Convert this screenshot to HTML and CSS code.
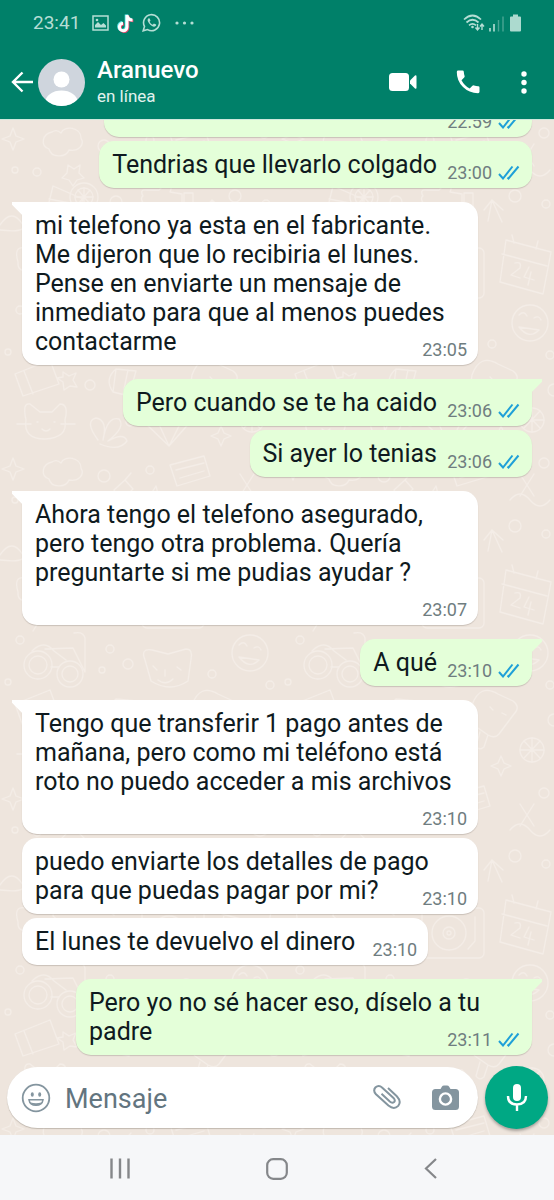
FILE: index.html
```html
<!DOCTYPE html>
<html lang="es">
<head>
<meta charset="utf-8">
<meta name="viewport" content="width=device-width, initial-scale=1">
<title>Aranuevo</title>
<link rel="stylesheet" href="styles.css">
</head>
<body>
<svg class="defs" width="0" height="0" aria-hidden="true">
  <symbol id="ticks" viewBox="0 0 22 15">
    <path d="M1 9l4 4.500L14.500 1.500M9.500 12.500l1 1L20.500 1.500" fill="none" stroke="currentColor" stroke-width="2"/>
  </symbol>
</svg>
<div class="app">
  <header class="top">
    <div class="status">
      <span class="clock">23:41</span>
      <svg width="17" height="16" viewBox="0 0 17 16" aria-hidden="true"><rect x="1" y="1" width="15" height="14" fill="none" stroke="currentColor" stroke-width="1.500"/><path d="M3 12.500V10l3-3 3 3 2.500-2L14 10.500v2z" fill="currentColor"/><circle cx="5" cy="5" r="1.300" fill="currentColor"/></svg>
      <svg width="17" height="20" viewBox="0 0 17 20" aria-hidden="true"><g fill="none" stroke-width="3"><path d="M10 2v12a3.800 3.800 0 1 1-4-3.800M10 2c.3 3 2.500 5 5.500 5" stroke="#5fe3e6" transform="translate(-.8 -.6)"/><path d="M10 2v12a3.800 3.800 0 1 1-4-3.800M10 2c.3 3 2.500 5 5.500 5" stroke="#e8446a" transform="translate(.8 .7)"/><path d="M10 2v12a3.800 3.800 0 1 1-4-3.800M10 2c.3 3 2.500 5 5.500 5" stroke="#fff"/></g></svg>
      <svg width="19" height="19" viewBox="0 0 19 19" aria-hidden="true"><path d="M1.200 17.800l1.300-4.400a8 8 0 1 1 3.100 3.200z" fill="none" stroke="currentColor" stroke-width="1.600"/><path d="M6.800 5.200c-1.600.9-1.600 2.700.2 5s4.300 3.900 5.800 3.400 1.500-1.700 1.300-2l-2.200-1.100-1.200 1.200C9.300 11.200 8 9.900 7.600 8.800l.9-1.100-.8-2.200z" fill="currentColor"/></svg>
      <svg class="more" width="19" height="4" viewBox="0 0 19 4" fill="currentColor" aria-hidden="true"><circle cx="2" cy="2" r="1.600"/><circle cx="9.500" cy="2" r="1.600"/><circle cx="17" cy="2" r="1.600"/></svg>
      <span class="spacer"></span>
      <svg width="59" height="18" viewBox="0 0 59 18" aria-hidden="true">
        <g fill="none" stroke="currentColor" stroke-width="1.700"><path d="M1 5.500q8.500-8 17 0M3.500 8.500q6-5.500 12 0M6 11.300q3.500-3 7 0"/></g>
        <circle cx="9.500" cy="13" r="1.300" fill="currentColor"/>
        <path d="M14.500 10v5M12.500 13.500l2 2.500 2-2.500M19 16v-5M17 12.500l2-2.500 2 2.500" fill="none" stroke="currentColor" stroke-width="1.400"/>
        <path d="M27 14v3.500M31 10v7.500" stroke="currentColor" stroke-width="1.600"/>
        <path d="M35.500 6v11.500M40 2.500v15" stroke="currentColor" stroke-width="1.400" opacity=".4"/>
        <path d="M47 3.500q0-1 1-1h2V.500h5v2h2q1 0 1 1v13q0 1-1 1h-9q-1 0-1-1z" fill="currentColor" opacity=".95"/>
      </svg>
    </div>
    <div class="bar">
      <button class="icon back" aria-label="Atrás"><svg width="22" height="22" viewBox="0 0 22 22"><path d="M22 11H2M11.500 1.500L2 11l9.500 9.500" fill="none" stroke="currentColor" stroke-width="2.400"/></svg></button>
      <svg class="avatar" viewBox="0 0 47 47" aria-hidden="true"><defs><clipPath id="round"><circle cx="23.500" cy="23.500" r="23.500"/></clipPath></defs><g clip-path="url(#round)"><path d="M0 0h47v47H0z" fill="#cfd5dd"/><circle cx="23.500" cy="20.500" r="8" fill="#fff"/><path d="M7 45c0-9 8-13.500 16.500-13.500S40 36 40 45v4H7z" fill="#fff"/></g></svg>
      <div class="who"><h1 class="name">Aranuevo</h1><p class="presence">en línea</p></div>
      <button class="icon" aria-label="Videollamada"><svg width="28" height="20" viewBox="0 0 28 20" fill="currentColor"><rect x="0" y="1" width="20" height="18" rx="3.500"/><path d="M21 8.500l5-5q1.500-.8 1.500 1v11q0 1.800-1.500 1l-5-5z"/></svg></button>
      <button class="icon call" aria-label="Llamar"><svg width="24" height="24" viewBox="0 0 24 24" fill="currentColor"><path d="M2.200.5h4.300q1.200 0 1.300 1.200.1 2.300.8 4.300.3.900-.4 1.600L5.500 10.300q2.800 5.400 8.200 8.200l2.700-2.700q.7-.7 1.600-.4 2 .7 4.300.8 1.200.1 1.200 1.300v4.300q0 1.400-1.400 1.400Q13 23 7 17 .8 10.800.8 1.900.8.500 2.200.5z"/></svg></button>
      <button class="icon menu" aria-label="Más opciones"><svg width="6" height="23" viewBox="0 0 6 23" fill="currentColor"><circle cx="3" cy="3" r="2.700"/><circle cx="3" cy="11.500" r="2.700"/><circle cx="3" cy="20" r="2.700"/></svg></button>
    </div>
  </header>

  <main class="chat">
    <svg class="wallpaper" aria-hidden="true">
      <defs>
        <pattern id="doodles" width="280" height="330" patternUnits="userSpaceOnUse">
          <g fill="none" stroke="#f4ede7" stroke-width="1.300" stroke-linejoin="round" stroke-linecap="round">
            <path d="M10 16l3-8 3 8 8 3-8 3-3 8-3-8-8-3zM52 12c-10 2-12 14-3 17 2 9 17 9 20 1 9 2 16-5 12-12 0-11-17-13-20-5-3-3-6-3-9-1z"/>
            <circle cx="104" cy="26" r="6"/><circle cx="37" cy="52" r="4"/><circle cx="15" cy="50" r="3"/>
            <path d="M114 40l11-10 8 9-13 13zM125 30l6-7M68 45l6 4 6-4-1 8 5 5-7 2-4 6-4-6-7-2 5-5z"/>
            <path d="M53 66l30 13-13 34q-5 4-13-1l-14-5zM49 79l31 6M60 88l2 5M67 95l1 4"/>
            <circle cx="84" cy="77" r="14"/><circle cx="84" cy="77" r="9"/><path d="M75 77h18M84 68v18M78 70l12 14M90 70L78 84"/>
            <path d="M143 76q-4-7 4-6h12l6-6q9-1 5 8l12 2v26l-14-3-7 6q-15 4-16-2-6-4-2-8-4-5 0-10-3-5 0-7zM184 73h9v26h-9z"/>
            <circle cx="116" cy="82" r="6"/><path d="M116 88v15M208 101l4-21 11 10M212 80l-8 10M222 102l-10-22"/>
            <circle cx="86" cy="105" r="3"/><circle cx="98" cy="104" r="3"/>
            <path d="M0 105q12-18 23 0 3 8-23 5M240 24l14 22M254 24l-14 22M230 50q10-12 20 0t20 0"/>
            <circle cx="264" cy="13" r="5"/><circle cx="266" cy="84" r="4"/><circle cx="235" cy="76" r="6"/>
            <path d="M226 120l45 12-8 42-43-12zM222 134l45 12M234 123l-2-8M256 129l2-8M235 143q7-2 5 5l-9 7 9 3M249 147l-5 10 10 3M251 152l-3 13"/>
            <circle cx="250" cy="203" r="18"/><path d="M239 195q5-5 8 1M254 198q5-3 7 2M239 207q10 13 20 3z"/>
            <path d="M18 142q-5-17 8-14 8-12 17-1 12-3 10 9 8 6 0 12l-26 3q-10 0-9-9zM36 153v12h7l-10 16M82 133q15-11 32 2M78 147h40l-6 14H84zM90 161v12h16v-12"/>
            <rect x="142" y="128" width="62" height="50" rx="5"/><circle cx="169" cy="153" r="17"/><circle cx="169" cy="153" r="6"/><circle cx="169" cy="153" r="2"/><path d="M195 137v24l-7 8"/>
            <circle cx="38" cy="215" r="14"/><circle cx="38" cy="215" r="9"/><circle cx="70" cy="224" r="13"/><circle cx="70" cy="224" r="8"/><path d="M32 201q12-12 22 0l12 9M45 199l28-1 12 24V188q-2-7-11-5M51 217h8"/>
            <circle cx="110" cy="199" r="4"/><circle cx="128" cy="214" r="5"/><circle cx="102" cy="220" r="3"/><circle cx="20" cy="190" r="4"/>
            <path d="M145 210q-5-12 7-10l16 4 18-5q7 0 5 10l-3 22q-18 12-37 0zM153 216l4 4M177 217l4 3M165 220v6M158 230q8 6 15-1"/>
            <path d="M15 254l35-14 9 24-36 12zM24 251l9 23M63 252l6 4 7-3-3 7 4 7-7-1-6 4-1-8-6-4 6-1zM116 249q-12 10-3 23l16 4 7-25zM116 249l-3 23M128 250l-5 24"/>
            <circle cx="162" cy="266" r="3"/><circle cx="212" cy="224" r="4"/><circle cx="8" cy="232" r="3"/><circle cx="90" cy="265" r="5"/>
            <path d="M192 255q8-22 26-11l15 7q8 6 1 13l-15 20q-4 5-11 1l-13-9q-6-6-3-21zM208 285l-4 12q-5 4-8-1l4-14M210 257l3 3M222 263l4 2"/>
            <path d="M26 300q-4-18 4-16l10 8h12l8-8q9 0 5 16 3 18-20 19-22 0-19-19zM37 302h1M54 302h1M42 309q4 4 8 0M17 304h14M61 304h14"/>
            <path d="M98 320q-14-19-2-22 12 2 7 22 4-24 16-21 7 8-11 22 16-9 19 0-8 11-27 3M152 290h30l10 10-23 26-27-26zM142 300h50M157 300l12 26 13-26"/>
            <circle cx="252" cy="300" r="12"/><path d="M252 288v24M240 300h24M244 291l16 17M260 291l-16 17M218 313l3-7 3 7 7 3-7 3-3 7-3-7-7-3z"/>
            <circle cx="270" cy="235" r="4"/><circle cx="130" cy="302" r="4"/><circle cx="274" cy="270" r="6"/><circle cx="150" cy="20" r="4"/>
            <path d="M170 15l34-9 6 20-33 10zM176 20l28-7M180 28l24-7M142 44h9l5-8 4 16 5-8h9"/>
          </g>
        </pattern>
      </defs>
      <rect width="100%" height="100%" fill="url(#doodles)"/>
    </svg>

    <section class="messages" aria-label="Mensajes">
      <article class="bubble out wide"><p class="text"><i class="room"></i></p><div class="meta"><time>22:59</time><svg class="ticks"><use href="#ticks"/></svg></div></article>
      <article class="bubble out"><p class="text">Tendrias que llevarlo colgado<i class="room"></i></p><div class="meta"><time>23:00</time><svg class="ticks"><use href="#ticks"/></svg></div></article>
      <article class="bubble in first"><p class="text">mi telefono ya esta en el fabricante. Me dijeron que lo recibiria el lunes. Pense en enviarte un mensaje de inmediato para que al menos puedes contactarme<i class="room"></i></p><div class="meta"><time>23:05</time></div></article>
      <article class="bubble out first"><p class="text">Pero cuando se te ha caido<i class="room"></i></p><div class="meta"><time>23:06</time><svg class="ticks"><use href="#ticks"/></svg></div></article>
      <article class="bubble out"><p class="text">Si ayer lo tenias<i class="room"></i></p><div class="meta"><time>23:06</time><svg class="ticks"><use href="#ticks"/></svg></div></article>
      <article class="bubble in first"><p class="text">Ahora tengo el telefono asegurado, pero tengo otra problema. Quería preguntarte si me pudias ayudar ?<i class="room"></i></p><div class="meta"><time>23:07</time></div></article>
      <article class="bubble out first"><p class="text">A qué<i class="room"></i></p><div class="meta"><time>23:10</time><svg class="ticks"><use href="#ticks"/></svg></div></article>
      <article class="bubble in first"><p class="text">Tengo que transferir 1 pago antes de mañana, pero como mi teléfono está roto no puedo acceder a mis archivos<i class="room"></i></p><div class="meta"><time>23:10</time></div></article>
      <article class="bubble in"><p class="text">puedo enviarte los detalles de pago para que puedas pagar por mi?<i class="room"></i></p><div class="meta"><time>23:10</time></div></article>
      <article class="bubble in"><p class="text">El lunes te devuelvo el dinero<i class="room"></i></p><div class="meta"><time>23:10</time></div></article>
      <article class="bubble out first"><p class="text">Pero yo no sé hacer eso, díselo a tu padre<i class="room"></i></p><div class="meta"><time>23:11</time><svg class="ticks"><use href="#ticks"/></svg></div></article>
    </section>

    <form class="composer">
      <div class="field">
        <button type="button" class="icon" aria-label="Emojis"><svg width="30" height="30" viewBox="0 0 30 30"><circle cx="15" cy="15" r="13.300" fill="none" stroke="currentColor" stroke-width="1.800"/><ellipse cx="11.300" cy="11.500" rx="1.500" ry="2.200" fill="currentColor"/><ellipse cx="18.700" cy="11.500" rx="1.500" ry="2.200" fill="currentColor"/><path d="M8 16.800h14q-.8 5.400-7 5.400t-7-5.400z" fill="none" stroke="currentColor" stroke-width="1.500"/><path d="M9.500 19.500q5.500 1.500 11 0-1.500 2.700-5.500 2.700t-5.500-2.700z" fill="currentColor"/></svg></button>
        <input class="entry" type="text" placeholder="Mensaje" aria-label="Mensaje">
        <button type="button" class="icon" aria-label="Adjuntar"><svg width="30" height="28" viewBox="0 0 30 28"><path d="M16 4l8.800 8.200q5 5.300 1.400 9.700-4.200 4.300-9.800-.3L4 10.200Q.6 6.500 3.600 3.300q3.200-2.800 6.700.4l11.200 10.200q2.200 2.300.6 4.100-1.900 1.600-4.300-.5L9.500 9.800" fill="none" stroke="currentColor" stroke-width="2"/></svg></button>
        <button type="button" class="icon camera" aria-label="Cámara"><svg width="27" height="26" viewBox="0 0 27 26"><path d="M3.500 4h5l1.500-2.500Q10.500.5 12 .5h3q1.500 0 2 1L18.500 4h5Q27 4 27 7.500v14q0 3.500-3.500 3.500h-20Q0 25 0 21.500v-14Q0 4 3.500 4z" fill="currentColor"/><circle cx="13.500" cy="14" r="5.600" fill="none" stroke="#fff" stroke-width="2.400"/></svg></button>
      </div>
      <button type="button" class="mic" aria-label="Grabar mensaje de voz"><svg width="22" height="29" viewBox="0 0 22 29"><rect x="7" y="1" width="8" height="17" rx="4" fill="#fff"/><path d="M2 13q0 8.500 9 8.500t9-8.500M11 21.500V28" fill="none" stroke="#fff" stroke-width="2.400"/></svg></button>
    </form>
  </main>

  <nav class="system">
    <button class="icon" aria-label="Recientes"><svg width="20" height="21" viewBox="0 0 20 21"><path d="M1.500.5v20M10 .5v20M18.500.5v20" stroke="currentColor" stroke-width="2.400"/></svg></button>
    <button class="icon" aria-label="Inicio"><svg width="22" height="22" viewBox="0 0 22 22"><rect x="1.200" y="1.200" width="19.600" height="19.600" rx="6" fill="none" stroke="currentColor" stroke-width="2.200"/></svg></button>
    <button class="icon" aria-label="Volver"><svg width="13" height="21" viewBox="0 0 13 21"><path d="M12 1L2 10.500 12 20" fill="none" stroke="currentColor" stroke-width="2.200"/></svg></button>
  </nav>
</div>
</body>
</html>
```
FILE: styles.css
```css
* { box-sizing: border-box; }

body {
  margin: 0;
  font-family: Roboto, "Liberation Sans", sans-serif;
  color: #0f1a20;
}

h1, p { margin: 0; }

svg { display: block; flex: none; }

.defs { position: absolute; }

.app {
  display: flex;
  flex-direction: column;
  height: 100vh;
}

.icon {
  display: flex;
  align-items: center;
  justify-content: center;
  padding: 0;
  border: 0;
  background: none;
  color: inherit;
}

/* Header */
.top {
  flex: none;
  background: #008069;
  border-bottom: 1px solid #cfe8dc;
  color: #fff;
}

.status {
  display: flex;
  align-items: center;
  gap: 8px;
  height: 45px;
  padding: 0 32px 0 33px;
  color: #b5ded5;
}

.clock {
  margin-right: 4px;
  font-size: 19px;
  line-height: 24px;
}

.more { margin-left: 6px; }

.spacer { flex: 1; }

.bar {
  display: flex;
  align-items: center;
  height: 74px;
  padding: 0 27px 0 11px;
}

.avatar {
  width: 47px;
  height: 47px;
  margin-left: 5px;
}

.who {
  flex: 1;
  margin-left: 12px;
}

.name {
  font-size: 24px;
  font-weight: 500;
  line-height: 28px;
}

.presence {
  font-size: 17px;
  line-height: 24px;
  color: #e0f2ee;
}

.call { margin-left: 39px; }

.menu { margin-left: 41px; }

/* Conversation */
.chat {
  position: relative;
  flex: 1;
  min-height: 0;
  display: flex;
  flex-direction: column;
  background: #eee5dd;
}

.wallpaper {
  position: absolute;
  inset: 0;
  width: 100%;
  height: 100%;
}

.messages {
  position: relative;
  flex: 1;
  min-height: 0;
  display: flex;
  flex-direction: column;
  justify-content: flex-end;
  align-items: flex-start;
  gap: 4px;
  padding: 0 22px 11px;
  overflow: hidden;
}

.bubble {
  position: relative;
  flex: none;
  display: grid;
  max-width: calc(100% - 54px);
  padding: 9px 11px 5px 13px;
  border-radius: 15px;
  background: #fff;
  box-shadow: 0 1px 1px rgba(60, 50, 40, 0.2);
}

.out {
  align-self: flex-end;
  padding-right: 12px;
  background: #e4ffd9;
}

.wide { width: calc(100% - 82px); }

.first { margin-top: 10px; }

.in.first { border-top-left-radius: 0; }

.out.first { border-top-right-radius: 0; }

.first::before {
  content: "";
  position: absolute;
  top: 0;
  width: 11px;
  height: 15px;
  background: inherit;
}

.in.first::before {
  right: calc(100% - 1px);
  clip-path: polygon(0 0, 100% 0, 100% 100%, 90% 85%, 0 18%);
}

.out.first::before {
  left: calc(100% - 1px);
  clip-path: polygon(0 0, 100% 0, 100% 18%, 10% 85%, 0 100%);
}

.text {
  grid-area: 1 / 1;
  min-height: 29px;
  margin-bottom: 4px;
  font-size: 25px;
  line-height: 29px;
}

/* Keeps the end of the last line clear of the time */
.room {
  display: inline-block;
  width: 62px;
  height: 1px;
}

.out .room { width: 83px; }

.meta {
  grid-area: 1 / 1;
  align-self: end;
  justify-self: end;
  display: flex;
  align-items: center;
  gap: 6px;
  font-size: 18px;
  line-height: 20px;
  color: #6f7d80;
}

.ticks {
  width: 22px;
  height: 15px;
  margin-bottom: 2px;
  color: #1fa0d8;
}

/* Composer */
.composer {
  position: relative;
  flex: none;
  display: flex;
  align-items: center;
  gap: 7px;
  margin: 0;
  padding: 0 6px 6px 7px;
}

.field {
  flex: 1;
  min-width: 0;
  display: flex;
  align-items: center;
  height: 61px;
  padding: 0 19px 0 14px;
  border-radius: 31px;
  background: #fff;
  box-shadow: 0 1px 1px rgba(60, 50, 40, 0.25);
  color: #84959f;
}

.entry {
  flex: 1;
  min-width: 0;
  margin-left: 14px;
  padding: 2px 0 0;
  border: 0;
  outline: 0;
  background: none;
  font: 27px/32px Roboto, "Liberation Sans", sans-serif;
  color: #0f1a20;
}

.entry::placeholder {
  color: #63757f;
  opacity: 1;
}

.camera { margin-left: 30px; }

.mic {
  flex: none;
  display: flex;
  align-items: center;
  justify-content: center;
  width: 63px;
  height: 63px;
  padding: 0;
  border: 0;
  border-radius: 50%;
  background: #00a884;
  box-shadow: 0 2px 3px rgba(0, 0, 0, 0.3);
}

/* System navigation */
.system {
  flex: none;
  display: flex;
  justify-content: space-between;
  align-items: center;
  height: 65px;
  padding: 2px 117px 0 110px;
  background: #f6f7f9;
  color: #85878a;
}
```
